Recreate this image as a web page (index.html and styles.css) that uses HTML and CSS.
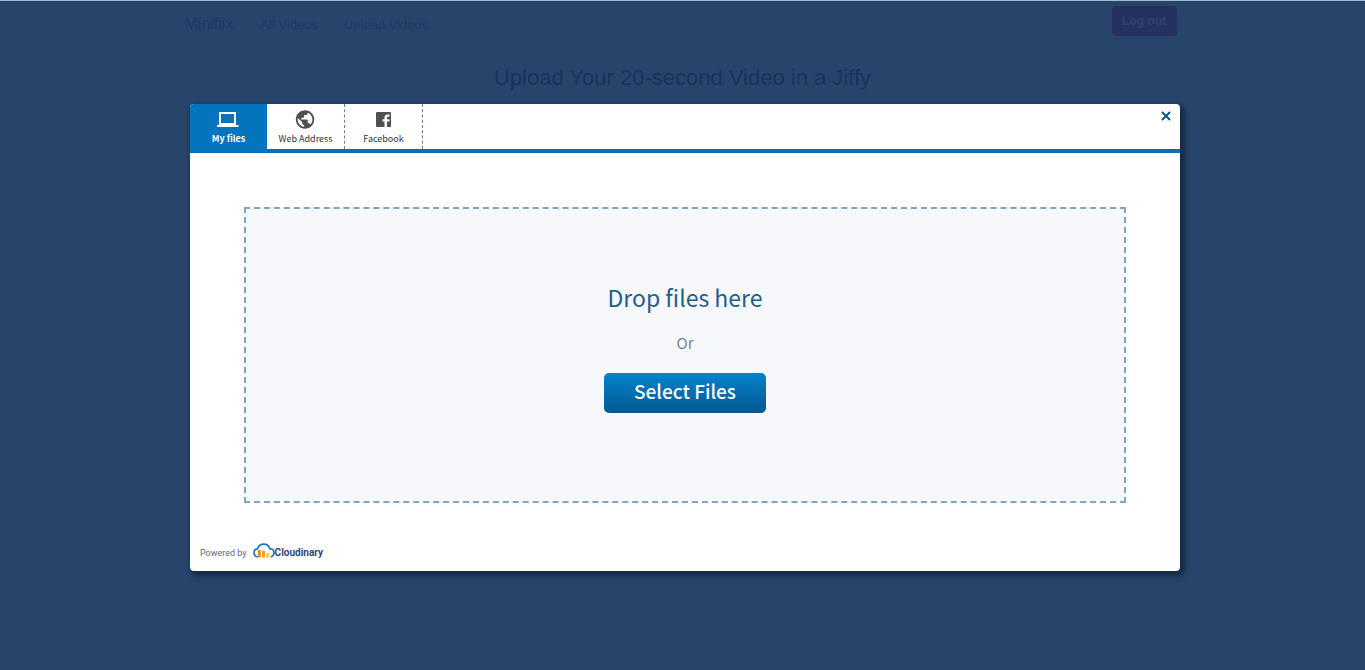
FILE: index.html
```html
<!DOCTYPE html>
<html lang="en">
<head>
<meta charset="utf-8">
<meta name="viewport" content="width=device-width, initial-scale=1">
<title>Miniflix</title>
<link rel="stylesheet" href="styles.css">
</head>
<body>
<div class="page">
  <nav class="navbar">
    <a class="brand" href="#">Miniflix</a>
    <a class="nav-link" href="#">All Videos</a>
    <a class="nav-link" href="#">Upload Videos</a>
    <button class="logout" type="button">Log out</button>
  </nav>
  <h1 class="title">Upload Your 20-second Video in a Jiffy</h1>
</div>
<div class="overlay">
  <section class="widget" role="dialog" aria-label="Upload files">
    <header class="tabs">
      <button class="tab tab-active" type="button">
        <svg class="tab-icon" viewBox="0 0 24 20" aria-hidden="true"><path d="M3 3h15v11H3z" fill="none" stroke="currentColor" stroke-width="2"/><path d="M0 15h21.500v2H0z" fill="currentColor"/></svg>
        <span>My files</span>
      </button>
      <button class="tab" type="button">
        <svg class="tab-icon" viewBox="0 0 24 20" aria-hidden="true"><g transform="translate(0 -1.500) scale(.92)"><path fill="currentColor" d="M12 2C6.480 2 2 6.480 2 12s4.480 10 10 10 10-4.480 10-10S17.520 2 12 2zm-1 17.930c-3.950-.490-7-3.850-7-7.930 0-.620.080-1.210.210-1.790L9 15v1c0 1.100.900 2 2 2v1.930zm6.900-2.540c-.260-.810-1-1.390-1.900-1.390h-1v-3c0-.550-.450-1-1-1H8v-2h2c.550 0 1-.450 1-1V7h2c1.100 0 2-.900 2-2v-.410c2.930 1.190 5 4.060 5 7.410 0 2.080-.800 3.970-2.100 5.390z"/></g></svg>
        <span>Web Address</span>
      </button>
      <button class="tab" type="button">
        <svg class="tab-icon" viewBox="0 0 24 20" aria-hidden="true"><rect x="4" y="2" width="15" height="15" rx="1" fill="currentColor"/><path d="M12.500 17v-5.500h-2V9.300h2V7.500c0-2 1-3 2.900-3h2.100v2.200h-1.300c-.8 0-1.200.3-1.200 1.100v1.500h2.500v2.200H15V17z" fill="#fff"/></svg>
        <span>Facebook</span>
      </button>
      <button class="close" type="button" aria-label="Close"><svg viewBox="0 0 10 10" aria-hidden="true"><path d="M1 1l8 8M9 1L1 9" stroke="currentColor" stroke-width="2" fill="none"/></svg></button>
    </header>
    <main class="drop-area">
      <p class="drop-title">Drop files here</p>
      <p class="drop-or">Or</p>
      <button class="select" type="button">Select Files</button>
    </main>
    <footer class="powered">
      <span>Powered by</span>
      <a class="cloudinary" href="#">
        <svg class="cloud" viewBox="0 0 22 16" aria-hidden="true"><path d="M5 14C2.500 13.600 1 12 1 9.800 1 7.600 2.500 6 4.600 5.800 5.500 3 7.900 1.200 10.800 1.200c3 0 5.200 1.700 6 4.400 2.500.2 4.200 1.900 4.200 4.200 0 2-1.200 3.500-3.200 4.100" fill="none" stroke="#2477bb" stroke-width="1.700"/><path d="M5 7h2.800v7.500H5z" fill="#f18a1c"/><path d="M9 7.500h3v7H9z" fill="#f5a02a"/><path d="M13.200 10h2.800v4.500h-2.800z" fill="#fccb4e"/></svg>
        <span>Cloudinary</span>
      </a>
    </footer>
  </section>
</div>
</body>
</html>
```
FILE: styles.css
```css
* {
  box-sizing: border-box;
}

body {
  margin: 0;
  min-height: 100vh;
  background: #27456b;
  border-top: 1px solid #a4b9cf;
  font-family: "Liberation Sans", Arial, sans-serif;
}

a {
  color: inherit;
  text-decoration: none;
}

button {
  margin: 0;
  padding: 0;
  border: 0;
  font-family: inherit;
}

p {
  margin: 0;
}

.page {
  max-width: 1024px;
  margin: 0 auto;
  padding: 0 14px;
  color: #17335f;
}

.navbar {
  display: flex;
  align-items: center;
  height: 46px;
  color: #1d3a66;
  font-size: 13px;
}

.brand {
  margin-right: 27px;
  font-size: 16px;
}

.nav-link {
  margin-right: 26px;
}

.logout {
  width: 65px;
  height: 30px;
  margin: 0 4px 6px auto;
  border-radius: 4px;
  background: #25325f;
  color: #2c4370;
  font-size: 12px;
  font-weight: bold;
}

.title {
  margin: 18px 0 0;
  text-align: center;
  font-size: 22px;
  line-height: 26px;
  font-weight: normal;
}

.overlay {
  position: absolute;
  inset: 0;
  padding: 104px 20px 20px 25px;
  font-family: "Noto Sans CJK SC", "Open Sans", sans-serif;
}

.widget {
  max-width: 990px;
  margin: 0 auto;
  border-radius: 4px;
  background: #fff;
  box-shadow: 3px 3px 5px 2px #142a48;
}

.tabs {
  display: flex;
  height: 49px;
  border-bottom: 4px solid #0c6eb0;
}

.tab {
  display: flex;
  flex-direction: column;
  align-items: center;
  width: 78px;
  height: 45px;
  padding-top: 6px;
  border-right: 1px dashed #62839f;
  background: none;
  color: #505050;
  font-size: 9px;
  line-height: 18px;
}

.tab span {
  color: #333;
}

.tab-active {
  width: 77px;
  height: 49px;
  border-right: 0;
  border-radius: 4px 0 0;
  background: #0474bf;
  color: #fff;
  font-weight: bold;
}

.tab-active span {
  color: #fff;
}

.tab-icon {
  width: 24px;
  height: 20px;
}

.close {
  width: 16px;
  height: 16px;
  margin: 4px 6px 0 auto;
  background: none;
  color: #0d5383;
}

.close svg {
  display: block;
  width: 10px;
  height: 10px;
  margin: auto;
}

.drop-area {
  display: flex;
  flex-direction: column;
  align-items: center;
  margin: 54px 54px 0;
  padding: 70px 0 88px;
  border: 2px dashed #7fa7c2;
  background: #f6f8fc;
}

.drop-title {
  color: #255f88;
  font-size: 23px;
  line-height: 36px;
}

.drop-or {
  margin: 16px 0 18px;
  color: #6588a8;
  font-size: 15px;
  line-height: 24px;
}

.select {
  width: 162px;
  height: 40px;
  padding-bottom: 5px;
  border-radius: 5px;
  background: linear-gradient(#0383cf, #04588d);
  color: #fff;
  font-size: 19px;
  font-weight: 500;
}

.powered {
  display: flex;
  align-items: center;
  gap: 6px;
  padding: 40px 10px 8px;
  color: #666;
  font-family: Roboto, sans-serif;
  font-size: 9px;
  line-height: 20px;
}

.cloudinary {
  display: flex;
  align-items: center;
  color: #29497a;
  font-size: 10px;
  font-weight: bold;
}

.cloud {
  width: 22px;
  height: 16px;
  margin-bottom: 4px;
}
```
